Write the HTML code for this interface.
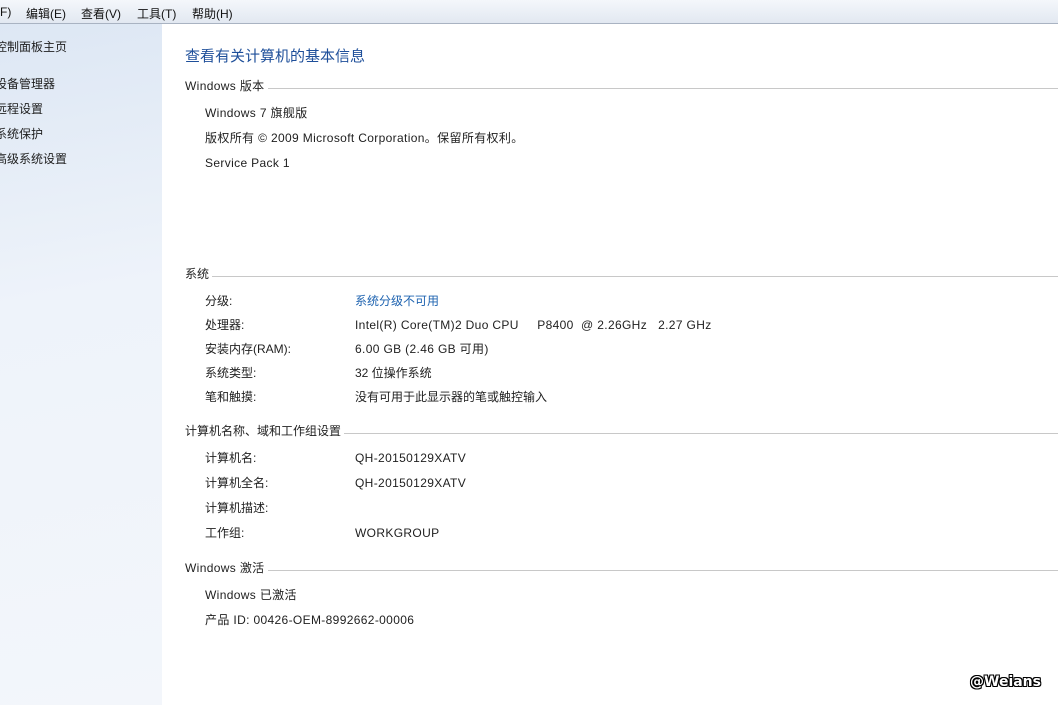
<!DOCTYPE html>
<html><head><meta charset="utf-8"><style>
*{margin:0;padding:0}
body{width:1058px;height:705px;overflow:hidden;background:#fff;position:relative;font-family:"Liberation Sans","Noto Sans CJK SC",sans-serif;font-size:12px;color:#1e1e1e}
.menu{position:absolute;left:0;top:0;width:1058px;height:23px;background:linear-gradient(#f4f7fb,#e2e8f1);border-bottom:1px solid #a9b3c2}
.menu span{position:absolute;top:5px;font-size:12px;color:#111}
.side{position:absolute;left:0;top:24px;width:162px;height:681px;background:linear-gradient(170deg,#dde7f4 0%,#eef3fa 40%,#f3f6fb 100%)}
.side div{position:absolute;left:0;font-size:12px;color:#1e1e1e}
.t{position:absolute;white-space:nowrap;line-height:14px}
.l{letter-spacing:0.35px}
h1{position:absolute;left:185px;top:45px;font-size:15px;font-weight:normal;color:#1e4f9a;white-space:nowrap}
.sec{position:absolute;left:185px;height:14px;width:873px;font-size:12px;line-height:14px}
.sec span{background:#fff;padding-right:3px;position:relative;z-index:1;color:#222}
.sec:after{content:"";position:absolute;left:0;right:0;top:9px;border-top:1px solid #c8c8c8}
.link{color:#1e63b0}
.wm{position:absolute;left:970px;top:674px;font:bold 14px "DejaVu Sans",sans-serif;color:#fff;text-shadow:1px 0 #000,-1px 0 #000,0 1px #000,0 -1px #000,1px 1px #000,-1px -1px #000,1px -1px #000,-1px 1px #000}
</style></head><body>
<div class="menu">
<span style="left:0">F)</span><span style="left:26px">编辑(E)</span><span style="left:81px">查看(V)</span><span style="left:137px">工具(T)</span><span style="left:192px">帮助(H)</span>
</div>
<div class="side">
<div style="top:14px;left:-5px">控制面板主页</div>
<div style="top:51px;left:-5px">设备管理器</div>
<div style="top:76px;left:-5px">远程设置</div>
<div style="top:101px;left:-5px">系统保护</div>
<div style="top:126px;left:-5px">高级系统设置</div>
</div>
<h1>查看有关计算机的基本信息</h1>
<div class="sec" style="top:79px"><span class="l">Windows 版本</span></div>
<div class="t l" style="left:205px;top:106px">Windows 7 旗舰版</div>
<div class="t l" style="left:205px;top:131px">版权所有 © 2009 Microsoft Corporation。保留所有权利。</div>
<div class="t l" style="left:205px;top:156px">Service Pack 1</div>
<div class="sec" style="top:267px"><span>系统</span></div>
<div class="t" style="left:205px;top:294px">分级:</div><div class="t link" style="left:355px;top:294px">系统分级不可用</div>
<div class="t" style="left:205px;top:318px">处理器:</div><div class="t l" style="left:355px;top:318px">Intel(R) Core(TM)2 Duo CPU &nbsp;&nbsp;&nbsp;&nbsp;P8400 &nbsp;@ 2.26GHz &nbsp;&nbsp;2.27 GHz</div>
<div class="t" style="left:205px;top:342px">安装内存(RAM):</div><div class="t l" style="left:355px;top:342px">6.00 GB (2.46 GB 可用)</div>
<div class="t" style="left:205px;top:366px">系统类型:</div><div class="t" style="left:355px;top:366px">32 位操作系统</div>
<div class="t" style="left:205px;top:390px">笔和触摸:</div><div class="t" style="left:355px;top:390px">没有可用于此显示器的笔或触控输入</div>
<div class="sec" style="top:424px"><span>计算机名称、域和工作组设置</span></div>
<div class="t" style="left:205px;top:451px">计算机名:</div><div class="t l" style="left:355px;top:451px">QH-20150129XATV</div>
<div class="t" style="left:205px;top:476px">计算机全名:</div><div class="t l" style="left:355px;top:476px">QH-20150129XATV</div>
<div class="t" style="left:205px;top:501px">计算机描述:</div>
<div class="t" style="left:205px;top:526px">工作组:</div><div class="t l" style="left:355px;top:526px">WORKGROUP</div>
<div class="sec" style="top:561px"><span class="l">Windows 激活</span></div>
<div class="t l" style="left:205px;top:588px">Windows 已激活</div>
<div class="t l" style="left:205px;top:613px">产品 ID: 00426-OEM-8992662-00006</div>
<div class="wm">@Weians</div>
</body></html>
